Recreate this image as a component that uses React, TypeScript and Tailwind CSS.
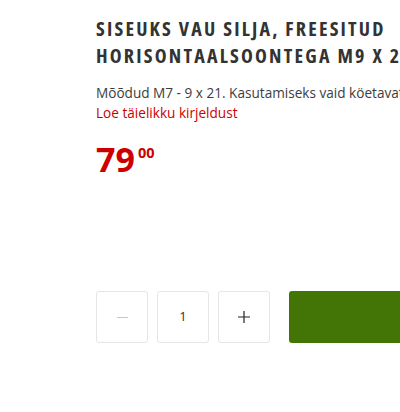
export default function App() {
  return (
    <div className="w-[400px] h-[412px] overflow-hidden bg-white font-['Open_Sans',sans-serif]">
      <div className="pl-[96px] pt-[15px] w-[700px]">
        <h1 className="text-[20px] leading-[27px] font-bold text-[#333333] tracking-[2.2px] font-stretch-condensed uppercase whitespace-nowrap">
          <div>Siseuks Vau Silja, freesitud</div>
          <div>horisontaalsoontega M9 x 21</div>
        </h1>
        <p className="mt-[14px] text-[13.6px] leading-[20px] text-[#3d3d3d] whitespace-nowrap">
          Mõõdud M7 - 9 x 21. Kasutamiseks vaid köetavates ruumides.
        </p>
        <p className="text-[13.6px] leading-[20px] text-[#cc0000] whitespace-nowrap">Loe täielikku kirjeldust</p>
        <div className="mt-[19px] flex items-start text-[#cc0000] font-bold">
          <span className="text-[34px] leading-[34px]">79</span>
          <span className="text-[14.5px] leading-[14px] ml-[3px] mt-[4px]">00</span>
        </div>
        <div className="mt-[115px] flex items-center">
          <button className="w-[52px] h-[52px] border border-[#e6e6e6] rounded-[3px] flex items-center justify-center">
            <span className="block w-[11px] h-[1px] bg-[#c8c8c8]" />
          </button>
          <div className="ml-[9px] w-[52px] h-[52px] border border-[#e6e6e6] rounded-[3px] flex items-center justify-center text-[13px] text-[#333333]">
            1
          </div>
          <button className="ml-[9px] w-[52px] h-[52px] border border-[#e6e6e6] rounded-[3px] flex items-center justify-center">
            <svg width="12" height="12" viewBox="0 0 12 12">
              <path d="M6 0V12M0 6H12" stroke="#222" strokeWidth="1.2" />
            </svg>
          </button>
          <button className="ml-[19px] w-[200px] h-[52px] rounded-[3px] bg-[#437506]" />
        </div>
      </div>
    </div>
  );
}
